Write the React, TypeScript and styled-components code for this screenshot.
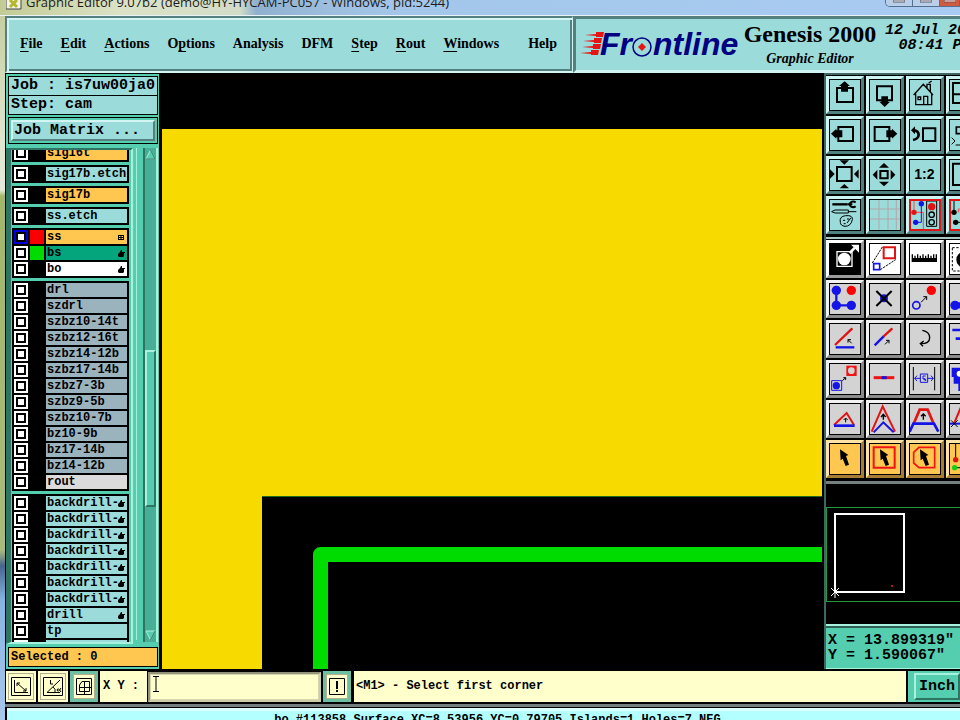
import React, { useEffect, useRef } from "react";
import styled, { createGlobalStyle } from "styled-components";

const c = {
  aqua: "#9bdbda",
  aquaLight: "#d3f6f4",
  aquaDark: "#55807f",
  teal: "#55ceb0",
  tealLight: "#a6f2de",
  tealDark: "#2d7462",
  trough: "#48ae96",
  orange: "#ffc650",
  cream: "#ffffcc",
  gray: "#d3d3d3",
  red: "#e01414",
  blue: "#1414e6",
};
const mono = `"Liberation Mono", "Courier New", monospace`;
const serif = `"Liberation Serif", "Times New Roman", serif`;

const Global = createGlobalStyle`
  * { box-sizing: border-box; }
  html, body { margin: 0; background: #000; overflow: hidden; }
  button, input { font: inherit; color: inherit; margin: 0; padding: 0; border-radius: 0; }
`;

const Page = styled.div`
  height: 100vh;
  display: grid;
  grid-template-rows: auto auto minmax(0, 1fr) auto auto;
  padding-left: 5px;
  overflow: hidden;
  color: #000;
  font-family: ${mono};
  background: linear-gradient(180deg, #c3cc9c 0, #dde3cb 130px, #e4e9da 190px, #a2b76a 196px, #a9bb7c 550px, #46658f 566px, #86b4e2 600px, #a8c8ec 100%);
`;

const TitleBar = styled.header`
  height: 16px;
  margin-left: -5px;
  padding: 0 0 0 6px;
  display: flex;
  align-items: flex-start;
  gap: 4px;
  overflow: hidden;
  border-bottom: 1px solid #e9f3f6;
  background: linear-gradient(90deg, #c3cb95 0, #dbe2c6 120px, #d3dcc8 240px, #8fb0cf 256px, #9dbede 330px, #a3c6ea 400px, #a9cbf2 100%);
`;
const TitleIcon = styled.svg`
  width: 16px;
  height: 10px;
  flex: none;
`;
const TitleText = styled.span`
  flex: 1;
  height: 15px;
  font: 13px/5px "Open Sans", "Noto Sans", sans-serif;
  white-space: nowrap;
  color: #1c1c1c;
`;
const WindowButtons = styled.div`
  display: flex;
  height: 7px;
  border: 1px solid #55708f;
  border-top: 0;
  border-right: 0;
  border-radius: 0 0 0 5px;
  overflow: hidden;
`;
const WindowButton = styled.button<{ $close?: boolean }>`
  width: ${(p) => (p.$close ? 20 : 27)}px;
  border: 0;
  border-right: 1px solid #55708f;
  background: ${(p) => (p.$close ? "#cf5b41" : "#b9cfe9")};
  display: flex;
  justify-content: center;
`;
const WindowMark = styled.svg`
  width: 12px;
  height: 3px;
`;

const Head = styled.div`
  display: grid;
  grid-template-columns: minmax(0, 568fr) minmax(0, 387fr);
`;
const MenuBar = styled.nav`
  height: 57px;
  display: flex;
  align-items: center;
  gap: 18px;
  padding: 0 15px 2px 13px;
  background: ${c.aqua};
  border: 2px solid ${c.aquaDark};
  border-right: 1px solid ${c.aquaLight};
  border-bottom: 2px solid ${c.aquaLight};
  box-shadow: inset 2px 2px ${c.aquaLight}, inset -2px -2px ${c.aquaDark};
`;
const MenuButton = styled.button<{ $last?: boolean }>`
  border: 0;
  background: none;
  font: bold 14px/18px ${serif};
  white-space: nowrap;
  margin-left: ${(p) => (p.$last ? "auto" : "0")};
  u { text-underline-offset: 3px; text-decoration-thickness: 1px; }
`;
const Brand = styled.div`
  height: 57px;
  display: flex;
  gap: 3px;
  overflow: hidden;
  padding-left: 3px;
  background: ${c.aqua};
  border-top: 3px solid ${c.aquaDark};
  border-left: 3px solid ${c.aquaDark};
  border-bottom: 3px solid ${c.aquaLight};
`;
const Logo = styled.svg`
  width: 160px;
  height: 50px;
  flex: none;
`;
const Titles = styled.div`
  width: 136px;
  flex: none;
  text-align: center;
  white-space: nowrap;
`;
const Product = styled.h1`
  margin: 0;
  font: bold 24px/30px ${serif};
`;
const Module = styled.p`
  margin: 0;
  font: italic bold 14px/20px ${serif};
`;
const Clock = styled.div`
  flex: none;
  padding: 4px 0 0 4px;
  text-align: center;
  font: italic bold 15px/15px ${mono};
  white-space: pre-line;
`;

const Main = styled.main`
  display: grid;
  grid-template-columns: 155px minmax(0, 1fr) 136px;
  min-height: 0;
  background: #000;
  border-bottom: 2px solid #000;
`;
const Side = styled.aside`
  display: flex;
  flex-direction: column;
  min-height: 0;
  padding: 2px 1px 2px 2px;
  background: ${c.teal};
  border: 1px solid #000;
  border-width: 1px 1px 0;
`;
const Info = styled.div`
  height: 20px;
  margin-bottom: -1px;
  padding-left: 2px;
  border: 1px solid #000;
  background: ${c.aqua};
  font: bold 15px/18px ${mono};
  white-space: nowrap;
  overflow: hidden;
  flex: none;
`;
const MatrixFrame = styled.div`
  flex: none;
  height: 27px;
  margin: 3px 0 4px;
  padding: 2px;
  display: flex;
  border: 1px solid #000;
`;
const Raised = styled.button<{ $teal?: boolean }>`
  flex: 1;
  padding-left: ${(p) => (p.$teal ? 3 : 1)}px;
  text-align: left;
  font: bold 15px/17px ${mono};
  white-space: nowrap;
  background: ${(p) => (p.$teal ? c.teal : c.aqua)};
  border: 2px solid;
  border-color: ${(p) => (p.$teal ? `${c.tealLight} #2d7462 #2d7462 ${c.tealLight}` : `${c.aquaLight} ${c.aquaDark} ${c.aquaDark} ${c.aquaLight}`)};
`;
const ListArea = styled.div`
  flex: 1;
  min-height: 0;
  display: grid;
  grid-template-columns: minmax(0, 1fr) 4px 15px;
  column-gap: 3px;
`;
const ListFrame = styled.div`
  display: flex;
  min-height: 0;
  margin-left: -2px;
  padding: 0 2px 0 0;
  border-left: 5px solid ${c.tealDark};
  border-top: 2px solid ${c.tealDark};
  border-right: 2px solid ${c.tealLight};
  border-bottom: 2px solid ${c.tealLight};
`;
const Layers = styled.ul`
  flex: 1;
  list-style: none;
  margin: 0;
  padding: 0 0 0 1px;
  overflow: hidden;
  display: flex;
  flex-direction: column;
  gap: 3px;
`;
const Group = styled.li`
  flex: none;
  background: #000;
  padding: 0 2px 2px;
`;
const Layer = styled.label`
  height: 16px;
  padding-top: 2px;
  display: grid;
  grid-template-columns: 14px 14px minmax(0, 1fr);
  column-gap: 2px;
`;
const Tick = styled.input<{ $active?: boolean }>`
  appearance: none;
  width: 14px;
  height: 14px;
  border: 2px solid ${(p) => (p.$active ? "#0000d8" : "#fff")};
  background: #fff;
  box-shadow: inset 0 0 0 2px #000;
`;
const Swatch = styled.span<{ $color: string }>`
  background: ${(p) => p.$color};
`;
const LayerName = styled.span<{ $bg: string }>`
  display: flex;
  align-items: center;
  justify-content: space-between;
  padding: 0 0 0 1px;
  overflow: hidden;
  background: ${(p) => p.$bg};
  font: bold 12px/14px ${mono};
  white-space: nowrap;
`;
const Mark = styled.svg`
  width: 8px;
  height: 9px;
  flex: none;
  margin: 0 2px 0 -2px;
`;
const Divider = styled.div`
  border-left: 1px solid ${c.tealLight};
  margin-bottom: 4px;
`;
const Scroll = styled.div`
  display: flex;
  flex-direction: column;
  min-height: 0;
  margin-bottom: 2px;
  background: ${c.trough};
  border-left: 2px solid ${c.tealDark};
  border-right: 2px solid ${c.tealLight};
`;
const ScrollButton = styled.button`
  flex: none;
  height: 13px;
  border: 0;
  background: none;
  display: flex;
`;
const Arrow = styled.svg`
  width: 11px;
  height: 13px;
`;
const Track = styled.div`
  flex: 1;
  display: grid;
  grid-template-rows: 189fr 157fr 122fr;
`;
const Thumb = styled.div`
  grid-row: 2;
  background: ${c.teal};
  border: 2px solid;
  border-color: ${c.tealLight} ${c.tealDark} ${c.tealDark} ${c.tealLight};
`;
const Selected = styled.div`
  flex: none;
  height: 20px;
  margin-top: 3px;
  padding-left: 2px;
  border: 1px solid #000;
  background: ${c.orange};
  font: bold 12px/18px ${mono};
`;

const Canvas = styled.svg`
  display: block;
  width: 100%;
  height: 100%;
  min-height: 0;
  background: #000;
  border: 2px solid #000;
  border-width: 0 2px;
`;

const Tools = styled.aside`
  display: flex;
  flex-direction: column;
  min-width: 0;
  min-height: 0;
  overflow: hidden;
  border-left: 2px solid #3f6663;
`;
const ToolGrid = styled.div<{ $tone: string }>`
  flex: none;
  width: 160px;
  display: grid;
  grid-template-columns: repeat(4, 38px);
  gap: 2px;
  padding: 1px 0 3px;
  border-top: 2px solid ${(p) => p.$tone};
`;
const ToolButton = styled.button<{ $kind: Kind }>`
  width: 38px;
  height: 38px;
  border: 3px solid;
  border-color: ${(p) => edges[p.$kind]};
  background: ${(p) => faces[p.$kind]};
  display: flex;
`;
const ToolIcon = styled.svg`
  width: 32px;
  height: 32px;
  overflow: hidden;
`;
const Overview = styled.svg`
  flex: 1;
  min-height: 0;
  width: 100%;
  background: #000;
  border-top: 3px solid #73807f;
`;
const Coords = styled.div`
  flex: none;
  height: 45px;
  padding: 7px 0 0 2px;
  background: ${c.teal};
  border-top: 2px solid ${c.tealLight};
  border-bottom: 1px solid ${c.tealLight};
  box-shadow: inset 0 2px #2d5f54;
  font: bold 15px/15px ${mono};
  white-space: pre;
`;

const Bar = styled.form`
  display: flex;
  height: 33px;
  background: #000;
  border-bottom: 2px solid #000;
  padding-left: 1px;
  gap: 1px;
`;
const ModeButton = styled.button<{ $on?: boolean }>`
  flex: none;
  width: ${(p) => (p.$on ? 28 : 30)}px;
  padding: ${(p) => (p.$on ? 1 : 2)}px;
  display: flex;
  background: ${c.cream};
  border: ${(p) => (p.$on ? `3px solid #6dbfa3` : `2px solid ${c.cream}`)};
  box-shadow: inset 0 0 0 1px #b0b08c;
  margin-right: 1px;
`;
const ModeIcon = styled.svg`
  width: 100%;
  height: 100%;
`;
const XyLabel = styled.label`
  flex: none;
  width: 47px;
  padding-left: 3px;
  background: ${c.cream};
  font: bold 12px/31px ${mono};
`;
const XyInput = styled.input`
  flex: none;
  width: 173px;
  outline: 0;
  background: ${c.cream};
  border: 2px solid;
  border-color: #94947a #cdcda8 #cdcda8 #94947a;
  box-shadow: inset 0 0 0 1px #d5d5ae;
  font: bold 12px/20px ${mono};
`;
const Caret = styled.svg`
  width: 6px;
  height: 16px;
  margin: 4px 0 0 -168px;
  z-index: 1;
`;
const InputWrap = styled.div`
  display: flex;
  flex: none;
  width: 174px;
  padding: 1px 0 0;
`;
const Hint = styled.output`
  flex: 1;
  min-width: 0;
  padding-left: 2px;
  margin-left: 1px;
  background: ${c.cream};
  font: bold 12px/31px ${mono};
  white-space: nowrap;
  overflow: hidden;
`;
const UnitBox = styled.div`
  flex: none;
  width: 52px;
  display: flex;
  overflow: hidden;
  margin-left: 1px;
  padding: 2px 0 2px 6px;
  background: ${c.teal};
`;
const Message = styled.footer`
  height: 16px;
  border-top: 3px solid #73807f;
  background: #000;
  padding: 1px 0 0 2px;
  overflow: hidden;
`;
const MessageText = styled.div`
  padding: 2px 0 0 28px;
  text-align: center;
  background: #b3ffff;
  border-top: 3px solid #dcffff;
  font: bold 12px/14px ${mono};
  white-space: nowrap;
`;

type Kind = "aqua" | "gray" | "white" | "orange";
const faces: Record<Kind, string> = { aqua: c.aqua, gray: c.gray, white: "#fff", orange: c.orange };
const edges: Record<Kind, string> = {
  aqua: "#cdf5f4 #4f8080 #4f8080 #cdf5f4",
  gray: "#f2f2f2 #8b8b8b #8b8b8b #f2f2f2",
  white: "#fff #9b9b9b #9b9b9b #fff",
  orange: "#ffe3a4 #a77c35 #a77c35 #ffe3a4",
};

const K = "#000";
const line = (d: string, color = K, w = 6) => <path d={d} fill="none" stroke={color} strokeWidth={w} />;
const fill = (d: string, color = K) => <path d={d} fill={color} />;
const dot = (x: number, y: number, r: number, color: string) => <circle cx={x} cy={y} r={r} fill={color} />;
const pointer = fill("M33 19L58 36L51 39L60 65L50 69L41 47L35 52Z");

const tools: { name: string; kind: Kind; art: React.ReactNode; frame?: string }[] = [
  { name: "Pan up", kind: "aqua", art: <>{line("M24 27H72V69H24Z")}{fill("M47 7L63 21H57V38H36V21H30Z")}</> },
  { name: "Pan down", kind: "aqua", art: <>{line("M24 22H69V64H24Z")}{fill("M37 52H57V68H63L47 84L31 68H37Z")}</> },
  { name: "Home", kind: "aqua", art: <>{line("M14 48L43 16L72 48M20 44V77H68V44M44 77V52H56V77M27 54H35V62H27ZM54 26V16H64V38M59 12L68 6", K, 4)}</> },
  { name: "Zoom area", kind: "aqua", art: <>{line("M12 12H84V72H12ZM12 46H84")}</> },
  { name: "Pan left", kind: "aqua", art: <>{line("M28 24H72V66H28Z")}{fill("M6 44L22 29V34H40V55H22V59Z")}</> },
  { name: "Pan right", kind: "aqua", art: <>{line("M17 24H61V66H17Z")}{fill("M85 44L69 29V34H52V55H69V59Z")}</> },
  { name: "Previous view", kind: "aqua", art: <>{line("M42 28H79V66H42Z")}{fill("M6 34L18 22V46Z")}{line("M16 34Q29 36 29 48Q28 60 12 63", K, 8)}</> },
  { name: "Cut view", kind: "aqua", art: <>{line("M22 24H50V44H22Z", K, 5)}{line("M8 56L18 66L8 76M20 78H50", K, 3)}</> },
  { name: "Zoom out", kind: "aqua", art: <>{line("M24 24H68V66H24Z")}{fill("M32 4H60L46 17ZM32 88H60L46 75ZM3 31V59L17 45ZM89 31V59L75 45Z")}</> },
  { name: "Zoom in", kind: "aqua", art: <>{line("M34 36H56V58H34Z", K, 6)}{fill("M45 12L60 26H30ZM45 82L60 68H30ZM11 47L25 32V62ZM79 47L65 32V62Z")}</> },
  { name: "Scale one to two", kind: "aqua", art: <text x="46" y="61" textAnchor="middle" fontFamily="Liberation Sans, Arial, sans-serif" fontWeight="bold" fontSize="42">1:2</text> },
  { name: "Full window", kind: "aqua", art: <>{line("M12 14H84V78H12Z")}</> },
  { name: "Setup", kind: "aqua", art: <>{line("M10 16H56", K, 7)}{line("M80 10A11 8 0 1 0 80 22M56 16H70", K, 6)}{line("M8 38L18 33H58V42H18ZM58 38H82", K, 3)}{line("M34 70Q30 52 50 50Q72 48 70 62Q66 82 48 82Q34 80 34 70Z", K, 3)}{line("M42 64h6M54 60h6M44 74h6M66 56L54 72", K, 3)}</> },
  { name: "Grid", kind: "aqua", art: <>{line("M30 3V92M57 3V92M3 30H92M3 60H92M82 3V92", "#b3a6a8", 3)}</> },
  { name: "Snap", kind: "aqua", frame: c.red, art: <>{line("M15 3V40H43V90", "#f44", 3)}{line("M37 14V70H20", c.blue, 3)}{dot(15, 40, 8, c.red)}{dot(37, 14, 8, c.blue)}{dot(20, 70, 8, c.blue)}{line("M53 6H83V82H53Z", K, 3)}{dot(68, 23, 11, c.red)}<circle cx="68" cy="47" r="8" fill="none" stroke={K} strokeWidth="4" /><circle cx="68" cy="70" r="8" fill="none" stroke={K} strokeWidth="4" /></> },
  { name: "Highlight net", kind: "aqua", frame: c.red, art: <>{line("M15 3V40M15 70H40", K, 3)}{line("M28 40V30H36V40H44", "#f44", 3)}{dot(15, 40, 8, K)}{dot(20, 70, 8, K)}</> },
  { name: "Feature select", kind: "white", art: <><rect width="96" height="96" fill={K} />{line("M24 26H69V70H24Z", "#fff", 4)}{dot(46, 48, 19, "#fff")}{line("M62 30L78 14", "#fff", 8)}{fill("M66 5H90V29L82 21L74 13Z", "#fff")}</> },
  { name: "Reference select", kind: "white", art: <>{line("M44 13H78V46H44Z", c.red)}{line("M14 62H32V80H14Z", c.blue, 5)}<path d="M10 60L40 12M34 80L80 50" stroke={K} strokeWidth="3" strokeDasharray="7 3" /></> },
  { name: "Measure", kind: "white", art: <>{fill("M8 57V34H12V45H16V38H20V45H24V34H28V45H32V38H36V45H40V34H44V45H48V38H52V45H56V34H60V45H64V38H68V45H72V34H76V45H80V34H84V57Z")}</> },
  { name: "Filter", kind: "white", art: <><rect x="10" y="14" width="72" height="70" fill="none" stroke={K} strokeWidth="3" strokeDasharray="7 5" />{dot(46, 50, 24, K)}</> },
  { name: "Add polyline", kind: "gray", art: <>{line("M22 22V67H67", c.blue, 7)}{dot(22, 22, 14, c.blue)}{dot(22, 67, 14, c.blue)}{dot(67, 67, 14, c.blue)}{dot(67, 22, 14, "#f00")}</> },
  { name: "Delete", kind: "gray", art: <>{dot(45, 46, 12, c.blue)}{line("M22 24L68 69M68 24L22 69", K, 6)}</> },
  { name: "Move", kind: "gray", art: <><circle cx="22" cy="67" r="11" fill="none" stroke={c.blue} strokeWidth="5" />{dot(67, 22, 14, "#f00")}{line("M36 58L53 41M43 41H53V51", K, 3)}</> },
  { name: "Copy", kind: "gray", art: <>{line("M20 67H80", c.blue, 18)}{dot(18, 67, 14, c.blue)}</> },
  { name: "Change angle", kind: "gray", art: <>{line("M18 66L70 16", c.red, 7)}{line("M20 73H76", c.blue, 7)}{line("M68 61L57 50M57 59V50H66", K, 3)}</> },
  { name: "Stretch", kind: "gray", art: <>{line("M43 41L70 16", c.red, 7)}{line("M17 67L44 40", c.blue, 7)}{line("M48 64L60 52M51 52H60V61", K, 3)}</> },
  { name: "Rotate", kind: "gray", art: <>{line("M40 22Q62 26 62 44Q62 62 36 62M44 54L34 62L42 70", K, 4)}</> },
  { name: "Parallel", kind: "gray", art: <>{line("M10 21H84M20 47H84", c.blue, 8)}</> },
  { name: "Scale", kind: "gray", art: <>{fill("M52 8H83V39H52Z", "#f01414")}{dot(67, 23, 10, c.gray)}{line("M8 53H38V82H8Z", c.blue, 3)}{dot(22, 68, 11, c.blue)}{line("M40 53L50 44M43 44H50V51", K, 3)}</> },
  { name: "Break line", kind: "gray", art: <>{line("M14 44H76", "#ee1414", 9)}{line("M38 44H53", c.blue, 9)}</> },
  { name: "Spacing", kind: "gray", art: <>{line("M13 12V82M77 12V82", K, 3)}{line("M34 33H56V58H34ZM17 46H34M56 46H73M24 38L17 46L24 54M66 38L73 46L66 54M50 39H42V48H50V54M46 46V52", c.blue, 3)}</> },
  { name: "Merge", kind: "gray", art: <>{fill("M8 14H60V48H48V84H28V62H14V42H8Z", c.blue)}{dot(32, 32, 9, "#fff")}</> },
  { name: "Triangle", kind: "gray", art: <>{line("M15 66L53 30L75 66", c.red, 6)}{line("M15 68H77", c.blue, 8)}{line("M50 58V46M44 51L50 45L56 51", K, 3)}</> },
  { name: "Spike", kind: "gray", art: <>{line("M8 86L41 10L78 86", c.red, 6)}{line("M14 88L43 58L74 88", c.blue, 6)}{line("M43 50V34M36 42L43 34L50 42", K, 4)}</> },
  { name: "Trapezoid", kind: "gray", art: <>{line("M15 60L32 20H56L73 60", c.red, 8)}{line("M2 86L13 62H75L88 86", c.blue, 8)}{line("M43 50V33M36 40L43 33L50 40", K, 4)}</> },
  { name: "Intersect", kind: "gray", art: <>{line("M14 64L36 12", c.red, 6)}{line("M2 62H80", c.blue, 6)}{line("M6 52L26 72M26 52L6 72", K, 3)}</> },
  { name: "Pick", kind: "orange", art: pointer },
  { name: "Pick in box", kind: "orange", art: <>{line("M14 13H77V74H14Z", "#f01414")}{pointer}</> },
  { name: "Pick in polygon", kind: "orange", art: <>{line("M30 13H77V74H30L14 60V28Z", "#f01414", 5)}{pointer}</> },
  { name: "Pick net", kind: "orange", art: <>{line("M20 3V46M18 74H60", K, 3)}{dot(20, 50, 8, c.red)}{dot(17, 74, 8, "#14d014")}</> },
];

const Tool = ({ name, kind, art, frame }: (typeof tools)[number]) => (
  <ToolButton type="button" $kind={kind} aria-label={name}>
    <ToolIcon viewBox="0 0 96 96" aria-hidden="true">
      {art}
      <rect x="1.5" y="1.5" width="93" height="93" fill="none" stroke={frame ?? K} strokeWidth={frame ? 9 : 3} />
    </ToolIcon>
  </ToolButton>
);

type LayerItem = { name: string; bg: string; color?: string; mark?: "hand" | "grid"; active?: boolean };
const many = (names: string[], bg: string): LayerItem[] => names.map((name) => ({ name, bg }));
const groups: LayerItem[][] = [
  many(["sig16t"], c.orange),
  many(["sig17b.etch"], c.aqua),
  many(["sig17b"], c.orange),
  many(["ss.etch"], c.aqua),
  [
    { name: "ss", bg: c.orange, color: "#fa0000", mark: "grid", active: true },
    { name: "bs", bg: "#04a57d", color: "#00dc00", mark: "hand" },
    { name: "bo", bg: "#fff", mark: "hand" },
  ],
  [
    ...many(["drl", "szdrl", "szbz10-14t", "szbz12-16t", "szbz14-12b", "szbz17-14b", "szbz7-3b", "szbz9-5b", "szbz10-7b", "bz10-9b", "bz17-14b", "bz14-12b"], "#9bb3bd"),
    { name: "rout", bg: "#dbdbdb" },
  ],
  [
    ...Array.from({ length: 7 }, (): LayerItem => ({ name: "backdrill-", bg: c.aqua, mark: "hand" })),
    { name: "drill", bg: c.aqua, mark: "hand" },
    { name: "tp", bg: c.aqua },
    { name: "", bg: c.aqua },
    { name: "", bg: c.aqua },
  ],
];

const menus: [string, string, string][] = [
  ["", "F", "ile"], ["", "E", "dit"], ["", "A", "ctions"], ["O", "p", "tions"], ["Analysis", "", ""],
  ["DFM", "", ""], ["", "S", "tep"], ["", "R", "out"], ["", "W", "indows"], ["Help", "", ""],
];

export default function App() {
  const list = useRef<HTMLUListElement>(null);
  useEffect(() => {
    if (list.current) list.current.scrollTop = 6;
  }, []);

  return (
    <Page>
      <Global />
      <TitleBar>
        <TitleIcon viewBox="0 0 16 10">
          <path d="M0 -2H15V9H0Z" fill="#f2f2e8" stroke="#444" />
          <path d="M4 0L11 7M11 0L4 7" stroke="#b5b82a" strokeWidth="3" />
        </TitleIcon>
        <TitleText>Graphic Editor 9.07b2 (demo@HY-HYCAM-PC057 - Windows, pid:5244)</TitleText>
        <WindowButtons>
          <WindowButton aria-label="Minimize"><WindowMark><path d="M0 0H12V2H0Z" fill="#fff" stroke="#556" /></WindowMark></WindowButton>
          <WindowButton aria-label="Maximize"><WindowMark><path d="M0 0H12V2H0Z" fill="#fff" stroke="#556" /></WindowMark></WindowButton>
          <WindowButton $close aria-label="Close"><WindowMark><path d="M0 0H12V2H0Z" fill="#fff" stroke="#844" /></WindowMark></WindowButton>
        </WindowButtons>
      </TitleBar>

      <Head>
        <MenuBar>
          {menus.map(([a, u, b]) => (
            <MenuButton key={a + u + b} type="button" $last={a === "Help"}>{a}{u && <u>{u}</u>}{b}</MenuButton>
          ))}
        </MenuBar>
        <Brand>
          <Logo viewBox="0 0 160 50" role="img" aria-label="Frontline">
            <path d="M6 16L17 15V13H25L24 18H17V17ZM4 22L15 21V19H23L22 24H15V23ZM3 28L14 27V25H22L21 30H14V29ZM1 34L12 33V31H20L19 36H12V35Z" fill="#e81414" />
            <g fill="#000080" fontFamily="Liberation Sans, Arial, sans-serif" fontWeight="bold" fontStyle="italic" fontSize="32">
              <text x="21" y="36">Fr</text>
              <text x="74" y="36">ntline</text>
            </g>
            <circle cx="63" cy="28" r="9" fill="none" stroke="#000080" strokeWidth="1.500" />
            <path d="M63 24L67 28L63 32L59 28Z" fill="#e81414" />
          </Logo>
          <Titles>
            <Product>Genesis 2000</Product>
            <Module>Graphic Editor</Module>
          </Titles>
          <Clock>{"12 Jul 2016\n08:41 PM"}</Clock>
        </Brand>
      </Head>

      <Main>
        <Side>
          <Info>Job : is7uw00ja0</Info>
          <Info>Step: cam</Info>
          <MatrixFrame><Raised type="button">Job Matrix ...</Raised></MatrixFrame>
          <ListArea>
            <ListFrame>
              <Layers ref={list}>
                {groups.map((g, i) => (
                  <Group key={i}>
                    {g.map((l, j) => (
                      <Layer key={j}>
                        <Tick type="checkbox" $active={l.active} aria-label={l.name || "Layer"} />
                        <Swatch $color={l.color ?? "#000"} />
                        <LayerName $bg={l.bg}>
                          {l.name}
                          {l.mark === "hand" && <Mark><path d="M4 1H5V3H8V4H7V7L6 8H2L1 7V5L3 3Z" /></Mark>}
                          {l.mark === "grid" && <Mark><path d="M1 2.500H7M1 4.500H7M1 6.500H7M1.500 2V7M4 2V7M6.500 2V7" stroke="#000" /></Mark>}
                        </LayerName>
                      </Layer>
                    ))}
                  </Group>
                ))}
              </Layers>
            </ListFrame>
            <Divider />
            <Scroll>
              <ScrollButton type="button" aria-label="Scroll up">
                <Arrow viewBox="0 0 11 13"><path d="M1 11L5.500 2L10 11Z" fill={c.teal} stroke={c.tealLight} /><path d="M5.500 2L10 11H1" fill="none" stroke={c.tealDark} /></Arrow>
              </ScrollButton>
              <Track><Thumb /></Track>
              <ScrollButton type="button" aria-label="Scroll down">
                <Arrow viewBox="0 0 11 13"><path d="M1 2H10L5.500 11Z" fill={c.teal} stroke={c.tealLight} /><path d="M10 2L5.500 11" stroke={c.tealDark} /></Arrow>
              </ScrollButton>
            </Scroll>
          </ListArea>
          <Selected>Selected : 0</Selected>
        </Side>

        <Canvas aria-label="Board view">
          <rect y="56" width="100%" height="100%" fill="#f7da00" />
          <rect x="100" y="424" width="100%" height="100%" fill="#000" />
          <path d="M100 423.500H3000" stroke="#1f6a1f" />
          <path d="M158.500 3000V481.500H3000" fill="none" stroke="#00dc00" strokeWidth="15" strokeLinejoin="round" />
        </Canvas>

        <Tools>
          <ToolGrid $tone="#3f6663">{tools.slice(0, 16).map((t) => <Tool key={t.name} {...t} />)}</ToolGrid>
          <ToolGrid $tone="#a9c9c7">{tools.slice(16).map((t) => <Tool key={t.name} {...t} />)}</ToolGrid>
          <Overview aria-label="Overview">
            <rect x="0.500" y="23.500" width="400" height="94" fill="none" stroke="#249a35" />
            <rect x="9" y="30" width="69" height="78" fill="none" stroke="#fff" strokeWidth="2" />
            <path d="M5 104L13 112M13 104L5 112M9 100V114" stroke="#fff" />
            <rect x="65" y="101" width="2" height="2" fill="#a02030" />
          </Overview>
          <Coords>{'X = 13.899319"\nY = 1.590067"'}</Coords>
        </Tools>
      </Main>

      <Bar onSubmit={(e) => e.preventDefault()}>
        <ModeButton type="button" aria-label="Absolute coordinates">
          <ModeIcon viewBox="0 0 22 23"><path d="M1.500 2.500H20.500V20.500H1.500ZM4.500 5V17.500H18M7 8L16 16M7 11V8H10M16 13V16H13" fill="none" stroke="#000" /></ModeIcon>
        </ModeButton>
        <ModeButton type="button" aria-label="Polar coordinates">
          <ModeIcon viewBox="0 0 22 23"><path d="M1.500 2.500H20.500V20.500H1.500ZM18 5L5 17.500H18M8.500 5V9H11M11 12Q14 14 13 17M19 13Q16 18 15 15Q16 12 19 17" fill="none" stroke="#000" /></ModeIcon>
        </ModeButton>
        <ModeButton type="button" $on aria-label="Snap to grid">
          <ModeIcon viewBox="0 0 20 21"><path d="M2.500 2.500H17.500V18.500H2.500ZM10.500 5V18M5 11.500H17M5.500 15.500V9L8 5.500H15.500V15.500Z" fill="none" stroke="#000" /></ModeIcon>
        </ModeButton>
        <XyLabel htmlFor="xy">X Y :</XyLabel>
        <InputWrap>
          <XyInput id="xy" type="text" />
          <Caret><path d="M0 0.500H6M0 15.500H6M3 0V16" stroke="#000" /></Caret>
        </InputWrap>
        <ModeButton type="button" $on aria-label="Alert">
          <ModeIcon viewBox="0 0 20 21"><path d="M2.500 2.500H17.500V18.500H2.500Z" fill="none" stroke="#000" /><path d="M9 5H11V13H9ZM9 14H11V16H9Z" /></ModeIcon>
        </ModeButton>
        <Hint>&lt;M1&gt; - Select first corner</Hint>
        <UnitBox><Raised type="button" $teal>Inch</Raised></UnitBox>
      </Bar>
      <Message>
        <MessageText>bo #113858 Surface XC=8.53956 YC=0.79705 Islands=1 Holes=7 NEG</MessageText>
      </Message>
    </Page>
  );
}
